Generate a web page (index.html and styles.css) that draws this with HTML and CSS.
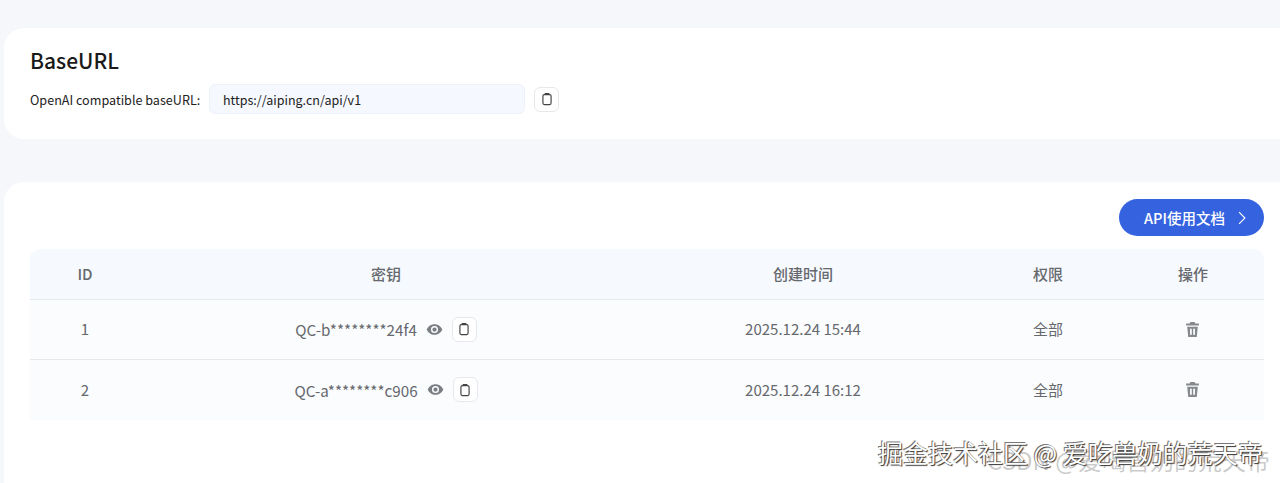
FILE: index.html
```html
<!DOCTYPE html>
<html lang="zh-CN">
<head>
    <meta charset="UTF-8">
    <title>API Keys</title>
    <link rel="stylesheet" href="styles.css">
</head>
<body>
    <section class="card base-card">
        <h2>BaseURL</h2>
        <div class="base-row">
            <span class="base-label">OpenAI compatible baseURL:</span>
            <div class="base-input">https://aiping.cn/api/v1</div>
            <button class="copy-btn base-copy" type="button">
                <svg viewBox="0 0 24 24"><rect x="5" y="4.500" width="14" height="17" rx="2.500"/><path d="M9 4.500V2.500h6v2"/></svg>
            </button>
        </div>
    </section>

    <section class="card keys-card">
        <div class="keys-top">
            <a class="docs-btn">API使用文档
                <svg viewBox="0 0 24 24"><path d="M7 2l10 10-10 10"/></svg>
            </a>
        </div>
        <div class="table">
            <div class="tr th">
                <div>ID</div>
                <div>密钥</div>
                <div>创建时间</div>
                <div>权限</div>
                <div>操作</div>
            </div>
            <div class="tr">
                <div>1</div>
                <div class="key-cell">
                    <span>QC-b********24f4</span>
                    <svg class="eye" viewBox="0 0 24 24"><path d="M12 4.500C7 4.500 2.700 7.600 1 12c1.700 4.400 6 7.500 11 7.500s9.300-3.100 11-7.500c-1.700-4.400-6-7.500-11-7.500zm0 12.500a5 5 0 1 1 0-10 5 5 0 0 1 0 10zm0-8a3 3 0 1 0 0 6 3 3 0 0 0 0-6z"/></svg>
                    <button class="copy-btn" type="button">
                        <svg viewBox="0 0 24 24"><rect x="5" y="4.500" width="14" height="17" rx="2.500"/><path d="M9 4.500V2.500h6v2"/></svg>
                    </button>
                </div>
                <div>2025.12.24 15:44</div>
                <div>全部</div>
                <div><svg class="trash" viewBox="0 0 24 24"><path d="M9 1.500h6l1 2h5v3H3v-3h5zM4.500 8h15L18 22.500H6zm4 3v8.500h2.500V11zm4.500 0v8.500h2.500V11z"/></svg></div>
            </div>
            <div class="tr">
                <div>2</div>
                <div class="key-cell">
                    <span>QC-a********c906</span>
                    <svg class="eye" viewBox="0 0 24 24"><path d="M12 4.500C7 4.500 2.700 7.600 1 12c1.700 4.400 6 7.500 11 7.500s9.300-3.100 11-7.500c-1.700-4.400-6-7.500-11-7.500zm0 12.500a5 5 0 1 1 0-10 5 5 0 0 1 0 10zm0-8a3 3 0 1 0 0 6 3 3 0 0 0 0-6z"/></svg>
                    <button class="copy-btn" type="button">
                        <svg viewBox="0 0 24 24"><rect x="5" y="4.500" width="14" height="17" rx="2.500"/><path d="M9 4.500V2.500h6v2"/></svg>
                    </button>
                </div>
                <div>2025.12.24 16:12</div>
                <div>全部</div>
                <div><svg class="trash" viewBox="0 0 24 24"><path d="M9 1.500h6l1 2h5v3H3v-3h5zM4.500 8h15L18 22.500H6zm4 3v8.500h2.500V11zm4.500 0v8.500h2.500V11z"/></svg></div>
            </div>
        </div>
    </section>

    <div class="mark mark-csdn">CSDN @爱喝兽奶的荒天帝</div>
    <div class="mark mark-juejin">掘金技术社区 @ 爱吃兽奶的荒天帝</div>
</body>
</html>
```

FILE: styles.css
```css
* {
    margin: 0;
    padding: 0;
    box-sizing: border-box;
}

html, body {
    height: 483px;
    overflow: hidden;
}

body {
    font-family: "Noto Sans CJK SC", "Noto Sans", sans-serif;
    background: #f5f7fb;
    padding: 28px 0 0 4px;
    position: relative;
}

.card {
    background: white;
    border-radius: 20px 0 0 20px;
}

.base-card {
    height: 111px;
    padding: 17px 26px 0;
}

.base-card h2 {
    font-size: 21px;
    font-weight: 500;
    line-height: 30px;
    color: #1a1a1a;
    margin-bottom: 9px;
}

.base-row {
    display: flex;
    align-items: center;
}

.base-label {
    font-size: 12.600px;
    color: #222;
    width: 179px;
}

.base-input {
    width: 316px;
    height: 30px;
    line-height: 29px;
    padding-left: 13px;
    font-size: 12.500px;
    color: #222;
    background: #f5f8fe;
    border: 1px solid #edf1f9;
    border-radius: 6px;
}

.copy-btn {
    width: 25px;
    height: 25px;
    background: white;
    border: 1px solid #e6e8ec;
    border-radius: 6px;
    display: flex;
    align-items: center;
    justify-content: center;
}

.copy-btn svg {
    width: 14px;
    height: 14px;
    fill: none;
    stroke: #444;
    stroke-width: 2;
}

.base-copy {
    margin-left: 9px;
}

.keys-card {
    margin-top: 43px;
    height: 320px;
    padding: 17px 16px 0 26px;
}

.keys-top {
    display: flex;
    justify-content: flex-end;
    height: 50px;
}

.docs-btn {
    width: 145px;
    height: 37px;
    padding-left: 25px;
    border-radius: 19px;
    background: #3563e0;
    color: white;
    font-size: 14.500px;
    font-weight: 500;
    display: flex;
    align-items: center;
    gap: 10px;
}

.docs-btn svg {
    width: 14px;
    height: 14px;
    fill: none;
    stroke: white;
    stroke-width: 2;
}

.table {
    width: 1234px;
    background: #fbfcfe;
    border-radius: 10px 10px 0 0;
}

.tr {
    display: grid;
    grid-template-columns: 110px 492px 342px 148px 142px;
    height: 60px;
    align-items: center;
    text-align: center;
    font-size: 15px;
    line-height: 20px;
    color: #65686d;
    border-bottom: 1px solid #e6e8eb;
}

.tr:last-child {
    border-bottom: none;
}

.tr > div {
    display: flex;
    align-items: center;
    justify-content: center;
    padding-bottom: 1px;
}

.th {
    height: 51px;
    background: #f6f9fd;
    font-weight: 500;
    border-radius: 10px 10px 0 0;
}

.key-cell {
    gap: 9px;
    font-size: 15.200px;
}

.eye {
    width: 17px;
    height: 17px;
    fill: #7b7e83;
}

.trash {
    width: 17px;
    height: 17px;
    margin-right: 2px;
    fill: #85888c;
}

.mark {
    position: absolute;
    white-space: nowrap;
}

.mark-csdn {
    left: 987px;
    top: 442px;
    font-size: 24px;
    color: rgba(140, 140, 140, 0.45);
}

.mark-juejin {
    left: 878px;
    top: 434px;
    font-size: 25px;
    color: white;
    text-shadow: 1px 1px 1px #333, -1px -1px 0 #777;
}
```
